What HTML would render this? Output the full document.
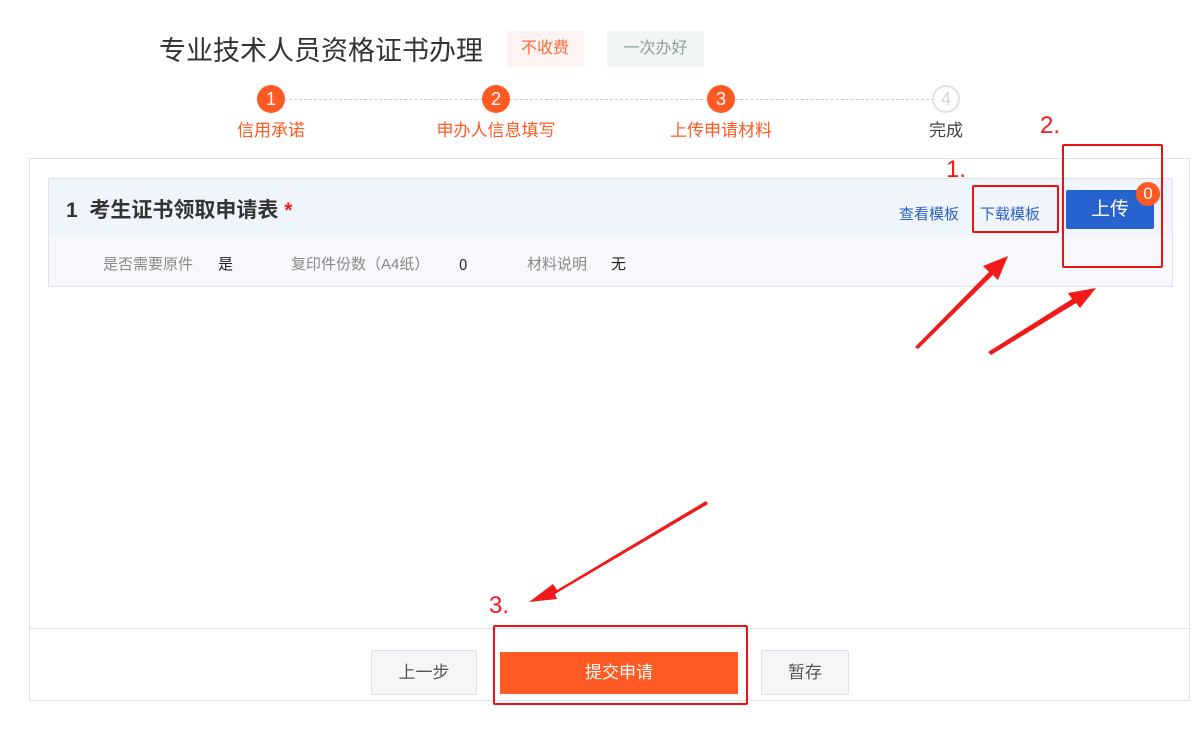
<!DOCTYPE html>
<html><head><meta charset="utf-8"><style>
*{margin:0;padding:0;box-sizing:border-box}
body{width:1196px;height:729px;background:#fff;position:relative;font-family:"Liberation Sans","Noto Sans CJK SC",sans-serif;overflow:hidden}
.a{position:absolute;white-space:nowrap}
.circ{position:absolute;width:28px;height:28px;border-radius:50%;background:#ff5a24;color:#fff;font-size:18px;text-align:center;line-height:28px}
.lbl{position:absolute;font-size:17px;color:#ff5a24;transform:translateX(-50%);top:116px}
.rb{position:absolute;border:2px solid #f01010;border-radius:2px}
.btn{position:absolute;background:#f5f6f8;border:1px solid #dde0e5;border-radius:2px;font-size:17px;color:#555;text-align:center}
.red{color:#f01a1a;font-size:24px}
.inf{position:absolute;top:254px;height:22px;line-height:22px;font-size:15px;color:#888;white-space:nowrap}
.v{color:#222}
</style></head><body>
<div class="a" style="left:159px;top:29px;font-size:27px;color:#333">专业技术人员资格证书办理</div>
<div class="a" style="left:506px;top:31px;height:36px;background:#fdf3f0;color:#ff6a3d;font-size:16px;line-height:36px;text-align:center;width:78px">不收费</div>
<div class="a" style="left:607px;top:31px;width:97px;height:36px;background:#f1f5f3;color:#8aa397;font-size:16px;line-height:36px;text-align:center">一次办好</div>
<div class="a" style="left:284px;top:99px;width:650px;border-top:1px dashed #c8c8c8"></div>
<div class="circ" style="left:257px;top:85px">1</div>
<div class="circ" style="left:482px;top:85px">2</div>
<div class="circ" style="left:707px;top:85px">3</div>
<div class="circ" style="left:932px;top:85px;background:#fff;border:2px solid #dde1e8;color:#d0d4dc;line-height:24px">4</div>
<div class="lbl" style="left:271px">信用承诺</div>
<div class="lbl" style="left:496px">申办人信息填写</div>
<div class="lbl" style="left:721px">上传申请材料</div>
<div class="lbl" style="left:946px;color:#444">完成</div>

<div class="a" style="left:29px;top:158px;width:1161px;height:543px;border:1px solid #dde1ea"></div>
<div class="a" style="left:30px;top:628px;width:1159px;border-top:1px solid #dde1ea"></div>
<div class="a" style="left:48px;top:178px;width:1125px;height:109px;border:1px solid #dde1ea;background:#f7f8fb"></div>
<div class="a" style="left:49px;top:179px;width:1123px;height:57px;background:#f0f4fb"></div>
<div class="a" style="left:66px;top:194px;font-size:21px;font-weight:bold;color:#333">1&nbsp; 考生证书领取申请表 <span style="color:#f01a1a">*</span></div>
<div class="a" style="left:899px;top:203px;font-size:15px;color:#2a62c9">查看模板</div>
<div class="a" style="left:980px;top:203px;font-size:15px;color:#2a62c9">下载模板</div>
<div class="a" style="left:1066px;top:190px;width:88px;height:39px;background:#2763cf;border-radius:2px;color:#fff;font-size:19px;text-align:center;line-height:39px">上传</div>
<div class="a" style="left:1136px;top:182px;width:24px;height:24px;border-radius:50%;background:#ff5a24;color:#fff;font-size:17px;text-align:center;line-height:24px">0</div>
<div class="inf" style="left:103px">是否需要原件</div>
<div class="inf v" style="left:218px">是</div>
<div class="inf" style="left:291px">复印件份数（A4纸）</div>
<div class="inf v" style="left:459px;font-family:'Noto Sans CJK SC',sans-serif">0</div>
<div class="inf" style="left:527px">材料说明</div>
<div class="inf v" style="left:611px">无</div>

<div class="btn" style="left:371px;top:650px;width:106px;height:45px;line-height:43px">上一步</div>
<div class="a" style="left:500px;top:652px;width:238px;height:42px;background:#ff5a24;color:#fff;font-size:17px;text-align:center;line-height:42px">提交申请</div>
<div class="btn" style="left:761px;top:650px;width:88px;height:45px;line-height:43px">暂存</div>

<div class="rb" style="left:972px;top:185px;width:87px;height:48px"></div>
<div class="rb" style="left:1062px;top:144px;width:101px;height:124px"></div>
<div class="rb" style="left:493px;top:625px;width:255px;height:80px"></div>
<div class="a red" style="left:946px;top:156px">1.</div>
<div class="a red" style="left:1040px;top:112px">2.</div>
<div class="a red" style="left:489px;top:592px">3.</div>
<svg class="a" style="left:0;top:0" width="1196" height="729">
<g fill="#f01a1a">
<polygon points="915,347 989,272 983,266 1008,256 998,280 993,275 918,349"/>
<polygon points="988,352 1072,299 1068,293 1096,288 1080,308 1076,303 991,355"/>
<polygon points="706,501 557,590 553,584 529,602 557,599 555,594 708,504"/>
</g></svg>
</body></html>
